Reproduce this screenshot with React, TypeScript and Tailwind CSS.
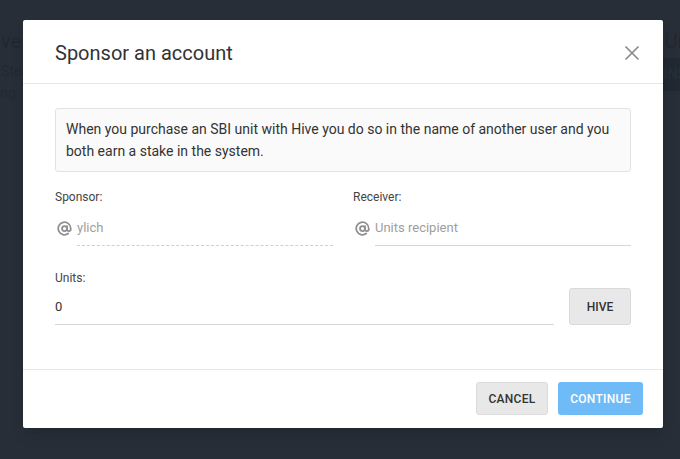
import React from "react";

function AtIcon() {
  return (
    <svg width="15" height="15" viewBox="0 0 24 24" fill="none" stroke="#8f8f8f" strokeWidth="2.8" strokeLinecap="round">
      <circle cx="12" cy="12" r="4" />
      <path d="M16 8v5a3 3 0 0 0 6 0v-1a10 10 0 1 0-4 8" />
    </svg>
  );
}

export default function App() {
  return (
    <div className="relative h-[459px] w-[680px] overflow-hidden bg-[#f3f4f6] font-['Roboto',sans-serif]">
      {/* page behind the dialog */}
      <div className="pt-[26px]">
        <div className="flex justify-between text-[20px] text-[#333]">
          <span className="-ml-[34px]">Active Steem</span>
          <span className="-mr-[20px]">Unit</span>
        </div>
        <div className="mt-[4px] flex items-start justify-between">
          <div className="-ml-[30px] text-[14px] leading-[22px] text-[#555]">
            <div>Hive Steem Basic</div>
            <div>Joining</div>
          </div>
          <div className="mr-[-40px] mt-[-2px] rounded bg-[#1f4e5a] px-4 py-[6px] text-[14px] text-white">SPONSOR</div>
        </div>
      </div>

      {/* overlay */}
      <div className="absolute inset-0 bg-[#202731]/[0.97]" />

      {/* dialog */}
      <div className="absolute left-[23px] top-[20px] w-[640px] rounded-[2px] bg-white shadow-lg">
        <div className="flex h-[64px] items-center justify-between border-b border-[#e6e6e6] pl-8 pr-[23px] pt-[2px]">
          <h2 className="text-[20px] font-normal text-[#333]">Sponsor an account</h2>
          <svg width="16" height="16" viewBox="0 0 16 16" stroke="#8a8a8a" strokeWidth="1.7">
            <path d="M1.5 1.5l13 13M14.5 1.5l-13 13" />
          </svg>
        </div>

        <div className="px-8 pt-6 pb-[44px]">
          <div className="rounded-[3px] border border-[#e2e2e2] bg-[#fafafa] px-[10px] py-[9px] text-[14px] leading-[22px] text-[#333]">
            When you purchase an SBI unit with Hive you do so in the name of another user and you both earn a stake in the system.
          </div>

          <div className="mt-[18px] grid grid-cols-2 gap-5">
            <div>
              <div className="text-[12px] leading-[14px] text-[#444]">Sponsor:</div>
              <div className="mt-[6px] flex items-center">
                <span className="ml-[2px] mr-[5px] flex w-[15px] justify-center">
                  <AtIcon />
                </span>
                <div className="flex h-[36px] flex-1 items-center border-b border-dashed border-[#cfcfcf] text-[13px] text-[#9e9e9e]">
                  ylich
                </div>
              </div>
            </div>
            <div>
              <div className="text-[12px] leading-[14px] text-[#444]">Receiver:</div>
              <div className="mt-[6px] flex items-center">
                <span className="ml-[2px] mr-[5px] flex w-[15px] justify-center">
                  <AtIcon />
                </span>
                <div className="flex h-[36px] flex-1 items-center border-b border-[#d6d6d6] text-[13px] text-[#9e9e9e]">
                  Units recipient
                </div>
              </div>
            </div>
          </div>

          <div className="mt-[25px] text-[12px] leading-[14px] text-[#444]">Units:</div>
          <div className="mt-[3px] flex items-end gap-[15px]">
            <div className="flex h-[36px] flex-1 items-center border-b border-[#d6d6d6] text-[13px] text-[#333]">0</div>
            <button className="h-[37px] w-[62px] rounded-[3px] border border-[#d9d9d9] bg-[#e8e8e8] text-[12px] font-medium text-[#333]">
              HIVE
            </button>
          </div>
        </div>

        <div className="flex justify-end gap-[10px] border-t border-[#e6e6e6] pt-[12px] pb-[13px] pr-5">
          <button className="h-[33px] w-[72px] rounded-[3px] border border-[#dcdcdc] bg-[#e8e8e8] text-[12px] font-medium tracking-[0.3px] text-[#333]">
            CANCEL
          </button>
          <button className="h-[33px] w-[85px] rounded-[3px] bg-[#6fbbf7] text-[12px] font-medium tracking-[0.3px] text-white">
            CONTINUE
          </button>
        </div>
      </div>
    </div>
  );
}
